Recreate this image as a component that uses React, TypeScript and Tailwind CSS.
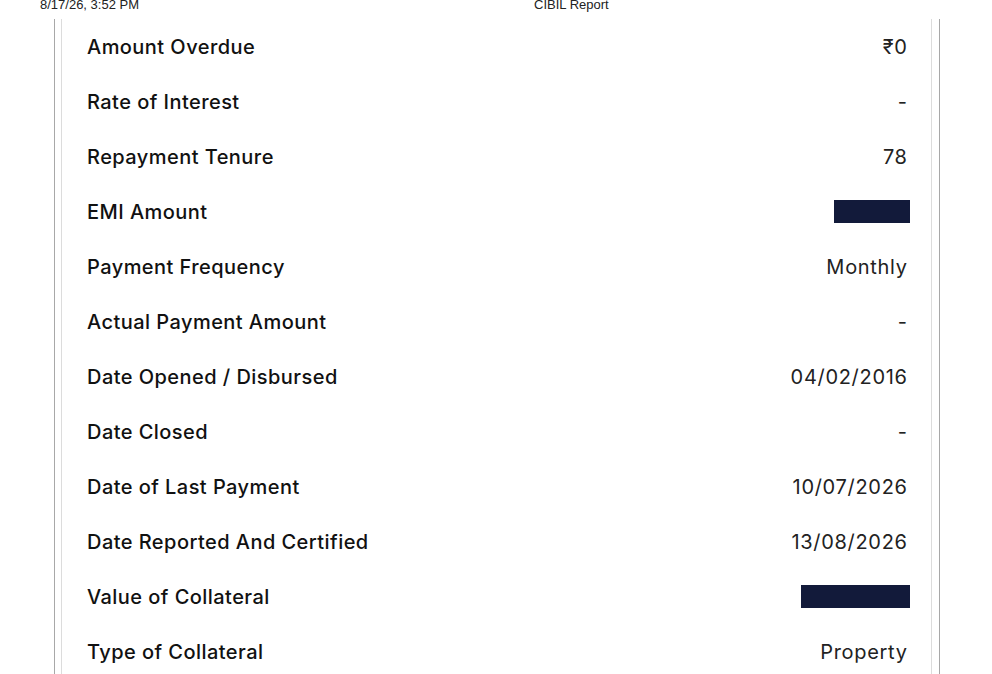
const rows: { label: string; value?: string; redact?: number }[] = [
  { label: "Amount Overdue", value: "₹0" },
  { label: "Rate of Interest", value: "-" },
  { label: "Repayment Tenure", value: "78" },
  { label: "EMI Amount", redact: 76 },
  { label: "Payment Frequency", value: "Monthly" },
  { label: "Actual Payment Amount", value: "-" },
  { label: "Date Opened / Disbursed", value: "04/02/2016" },
  { label: "Date Closed", value: "-" },
  { label: "Date of Last Payment", value: "10/07/2026" },
  { label: "Date Reported And Certified", value: "13/08/2026" },
  { label: "Value of Collateral", redact: 109 },
  { label: "Type of Collateral", value: "Property" },
];

export default function App() {
  return (
    <div className="h-[674px] w-[992px] overflow-hidden bg-white">
      {/* print header */}
      <div className="flex h-[19px] pl-[40px] font-['Liberation_Sans',Arial,sans-serif] text-[13px] leading-[13px] text-[#222]">
        <div className="-mt-[2px] w-[494px]">8/17/26, 3:52 PM</div>
        <div className="-mt-[2px]">CIBIL Report</div>
      </div>

      <div className="ml-[54px] h-[660px] w-[886px] border-x border-[#a8a8a8] pl-[6px] pr-[7px]">
        <div className="h-full border-x border-[#dcdcdc] pl-[25px] pr-[24px] font-['Inter',sans-serif]">
          {rows.map((r) => (
            <div key={r.label} className="flex h-[55px] items-center justify-between">
              <span className="text-[20px] font-medium tracking-[0.45px] text-[#111]">{r.label}</span>
              {r.redact ? (
                <span
                  className="-mr-[3px] h-[23px] bg-[#121a3a]"
                  style={{ width: r.redact }}
                />
              ) : (
                <span className="-mr-[0.7px] text-[20px] tracking-[0.7px] text-[#222]">{r.value}</span>
              )}
            </div>
          ))}
        </div>
      </div>
    </div>
  );
}
